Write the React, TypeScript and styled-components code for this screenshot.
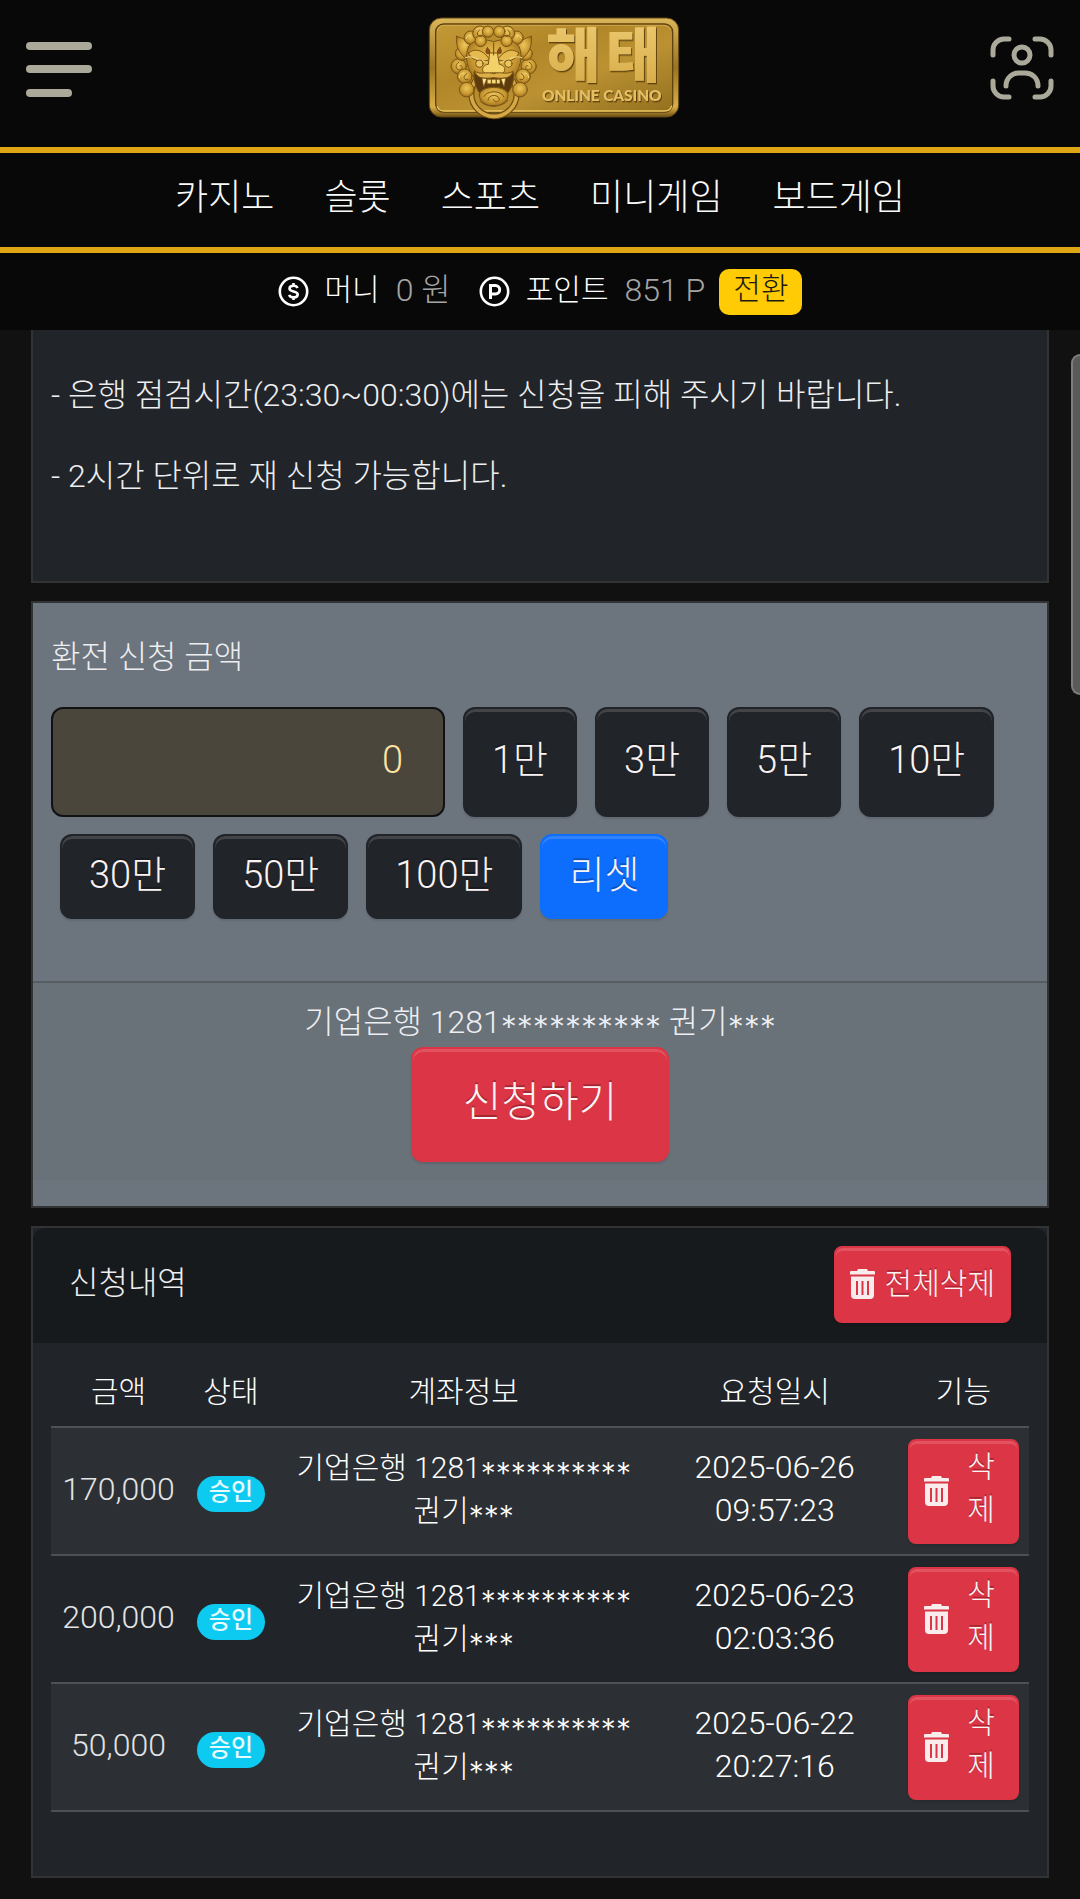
import React, { useState } from "react";
import styled, { createGlobalStyle, css } from "styled-components";

const GlobalStyle = createGlobalStyle`
  * { box-sizing: border-box; }
  body {
    margin: 0;
    background: #111111;
    color: #edeef0;
    font-family: Roboto, "Noto Sans CJK KR", sans-serif;
    font-weight: 300;
    font-size: 32px;
    line-height: 48px;
  }
  button, input { font: inherit; }
  button { cursor: pointer; }
`;

const Page = styled.div`
  position: relative;
  min-height: 100vh;
  display: flex;
  flex-direction: column;
`;

const ScrollThumb = styled.div`
  position: absolute;
  top: 354px;
  right: 0;
  width: 9px;
  height: 341px;
  border: 2px solid #7d7d7d;
  border-right: 0;
  border-radius: 9px 0 0 9px;
  background: #5a5a5a;
`;

const TopBar = styled.header`
  display: flex;
  align-items: center;
  justify-content: space-between;
  height: 147px;
  padding: 0 26px 12px;
  background: #080808;
`;

const IconButton = styled.button`
  display: flex;
  padding: 0;
  border: 0;
  background: none;
  color: #aba999;
`;

const LogoLink = styled.a`
  display: flex;
  margin-left: 26px;
`;

const LogoArt = styled.svg`
  overflow: visible;
`;

const MainNav = styled.nav`
  display: flex;
  justify-content: center;
  gap: 50px;
  padding: 21px 0 25px;
  border-top: 6px solid #dfa616;
  border-bottom: 6px solid #dfa616;
  background: #080808;
`;

const NavLink = styled.a`
  color: #fafafa;
  font-size: 36px;
  text-decoration: none;
  white-space: nowrap;
`;

const BalanceBar = styled.div`
  display: flex;
  align-items: center;
  justify-content: center;
  gap: 14px;
  height: 77px;
  background: #080808;
`;

const Balance = styled.div`
  display: flex;
  align-items: center;
  gap: 16px;
  color: #ffffff;
  font-size: 30px;

  &:first-child { margin-right: 14px; }
`;

const BalanceName = styled.span`
  padding-bottom: 4px;
`;

const BalanceValue = styled.span`
  padding-bottom: 4px;
  color: #a5a5a5;
  font-size: 32px;
`;

const ConvertButton = styled.button`
  height: 46px;
  padding: 0 14px;
  border: 0;
  border-radius: 10px;
  background: #ffcb04;
  color: #1c1a12;
  font-size: 30px;
  line-height: 40px;
  padding-bottom: 6px;
`;

const Content = styled.main`
  display: flex;
  flex-direction: column;
  gap: 18px;
  padding: 0 31px;
`;

const Panel = styled.section`
  border: 2px solid #323334;
  background: #212429;
`;

const NoticePanel = styled(Panel)`
  display: flex;
  flex-direction: column;
  gap: 33px;
  border-top: 0;
  padding: 41px 18px 81px;
`;

const NoticeLine = styled.p`
  margin: 0;
`;

const FormPanel = styled(Panel)`
  background: #6c747e;
`;

const AmountArea = styled.div`
  padding: 30px 18px 62px;
`;

const AmountLabel = styled.label`
  display: block;
  margin-bottom: 26px;
`;

const AmountRow = styled.div`
  display: flex;
  gap: 18px;

  & + & {
    margin-top: 17px;
    padding-left: 9px;
  }
`;

const AmountInput = styled.input`
  width: 394px;
  height: 110px;
  padding: 0 40px 4px;
  border: 2px solid #111214;
  border-radius: 12px;
  background: #4a463c;
  color: #ffe3a3;
  font-size: 38px;
  text-align: right;
`;

type Tone = "dark" | "blue" | "red";

const tones: Record<Tone, string> = {
  dark: "#212429",
  blue: "#0d6efd",
  red: "#dc3545",
};

const raised = css<{ $tone: Tone }>`
  border: 2px solid ${(p) => tones[p.$tone]};
  background: ${(p) => tones[p.$tone]};
  color: #faf3f4;
  text-shadow: 0 -2px 0 rgba(0, 0, 0, 0.25);
  box-shadow: inset 0 3px 0 rgba(255, 255, 255, 0.15), 0 2px 2px rgba(0, 0, 0, 0.1);
`;

const AmountButton = styled.button<{ $tone: Tone }>`
  ${raised}
  min-height: 85px;
  padding: 0 27px 4px;
  border-radius: 12px;
  font-size: 38px;
`;

const SubmitArea = styled.div`
  display: flex;
  flex-direction: column;
  align-items: center;
  margin-bottom: 26px;
  padding: 15px 0 18px;
  border-top: 2px solid #565d63;
  background: #697179;
`;

const SubmitButton = styled.button<{ $tone: Tone }>`
  ${raised}
  height: 115px;
  margin-top: 1px;
  padding: 0 50px 4px;
  border-radius: 12px;
  font-size: 42px;
`;

const MaskStars = styled.span`
  font-family: Inter, sans-serif;
  line-height: 1;
  vertical-align: -6px;
`;

const HistoryHeader = styled.div`
  display: flex;
  align-items: center;
  justify-content: space-between;
  padding: 18px 36px 20px;
  border-radius: 12px 12px 0 0;
  background: #171a1d;
`;

const HistoryTitle = styled.h2`
  margin: 0 0 4px;
  font-size: 32px;
  font-weight: 300;
`;

const DeleteAllButton = styled.button<{ $tone: Tone }>`
  ${raised}
  display: flex;
  align-items: center;
  gap: 10px;
  height: 77px;
  padding: 0 14px 2px;
  border-radius: 8px;
  font-size: 30px;
`;

const TableArea = styled.div`
  padding: 18px 18px 64px;
`;

const Table = styled.table`
  width: 100%;
  table-layout: fixed;
  border-collapse: collapse;
  font-size: 30px;
  line-height: 43px;
  text-align: center;
`;

const HeadCell = styled.th<{ $width: number }>`
  width: ${(p) => p.$width}%;
  height: 66px;
  padding: 0 0 4px;
  border-bottom: 2px solid #4d5154;
  color: #ffffff;
  font-weight: 300;
`;

const Row = styled.tr`
  height: 128px;
  border-bottom: 2px solid #4d5154;

  &:nth-child(odd) { background: #2c3034; }
`;

const Cell = styled.td`
  padding: 0 8px 4px;
  color: #ffffff;
`;

const NumberCell = styled(Cell)`
  font-size: 32px;
`;

const AmountCell = styled(NumberCell)`
  color: #e2e3e5;
`;

const ActionCell = styled.td`
  padding: 0 10px;
`;

const Badge = styled.span`
  display: inline-block;
  height: 36px;
  margin-top: 6px;
  padding: 0 12px;
  border-radius: 18px;
  background: #0dcaf0;
  color: #e8fbff;
  font-size: 24px;
  font-weight: 500;
  line-height: 32px;
  vertical-align: middle;
`;

const DeleteButton = styled.button<{ $tone: Tone }>`
  ${raised}
  display: flex;
  align-items: center;
  justify-content: space-between;
  width: 100%;
  height: 105px;
  padding: 0 20px 0 14px;
  border-radius: 8px;
`;

const DeleteText = styled.span`
  width: 32px;
  padding-bottom: 6px;
  word-break: break-all;
`;

function MenuIcon() {
  return (
    <svg width="66" height="60" viewBox="0 -4 66 60" fill="currentColor" aria-hidden="true">
      <rect width="66" height="8" rx="4" />
      <rect y="23" width="66" height="8" rx="4" />
      <rect y="47" width="46" height="8" rx="4" />
    </svg>
  );
}

function ProfileIcon() {
  return (
    <svg width="64" height="64" viewBox="0 0 64 64" fill="none" stroke="currentColor" strokeWidth="5" strokeLinecap="round" aria-hidden="true">
      <path d="M3 19v-5C3 8 8 3 14 3h5M45 3h5c6 0 11 5 11 11v5M61 45v5c0 6-5 11-11 11h-5M19 61h-5C8 61 3 56 3 50v-5" />
      <circle cx="32" cy="19" r="8" />
      <path d="M16 50c0-8 6-13 13-13h6c7 0 13 5 13 13" />
    </svg>
  );
}

function CoinIcon({ kind }: { kind: "money" | "point" }) {
  return (
    <svg width="31" height="31" viewBox="0 0 31 31" fill="none" stroke="#fff" strokeWidth="3" aria-hidden="true">
      <circle cx="15.5" cy="15.5" r="13.7" strokeWidth="2.6" />
      {kind === "money" ? (
        <path d="M19.500 12c-.6-1.600-2-2.300-4-2.300-2.300 0-4 1-4 2.800 0 4.200 8.200 1.700 8.200 6 0 1.800-1.800 2.900-4.200 2.900-2.200 0-3.800-.8-4.300-2.500M15.500 7v3M15.500 21v3" strokeWidth="2.6" />
      ) : (
        <path d="M11.500 23V9.500h5a4.200 4.200 0 0 1 0 8.400h-5" />
      )}
    </svg>
  );
}

function TrashIcon() {
  return (
    <svg width="25" height="30" viewBox="0 0 25 30" fill="#f8eced" aria-hidden="true">
      <path d="M8 0h9l1 2h6a1 1 0 0 1 1 1v2.500H0V3a1 1 0 0 1 1-1h6z" />
      <path fillRule="evenodd" d="M1 7.500h23V26a4 4 0 0 1-4 4H5a4 4 0 0 1-4-4zM6 12v14h2V12zm5.500 0v14h2V12zm5.500 0v14h2V12z" />
    </svg>
  );
}

function Logo() {
  return (
    <LogoArt width="250" height="102" viewBox="87 50 750 306" role="img" aria-label="해태 온라인 카지노">
      <defs>
        <linearGradient id="plate" x1="0" y1="0" x2="1" y2="1">
          <stop offset="0" stopColor="#c49a38" />
          <stop offset="0.35" stopColor="#b08628" />
          <stop offset="0.6" stopColor="#bb9132" />
          <stop offset="1" stopColor="#93701f" />
        </linearGradient>
        <linearGradient id="rim" x1="0" y1="0" x2="0" y2="1">
          <stop offset="0" stopColor="#dcb65a" />
          <stop offset="0.5" stopColor="#9a7420" />
          <stop offset="0.9" stopColor="#d9ae45" />
          <stop offset="1" stopColor="#6e5014" />
        </linearGradient>
        <radialGradient id="face" cx="0.5" cy="0.4" r="0.65">
          <stop offset="0" stopColor="#ecc75c" />
          <stop offset="0.6" stopColor="#c99831" />
          <stop offset="1" stopColor="#8b6218" />
        </radialGradient>
        <linearGradient id="letters" x1="0" y1="0" x2="0" y2="1">
          <stop offset="0" stopColor="#f0cd75" />
          <stop offset="1" stopColor="#d5aa45" />
        </linearGradient>
        <filter id="relief" x="-10%" y="-10%" width="120%" height="120%">
          <feDropShadow dx="3" dy="4" stdDeviation="1" floodColor="#5f4210" floodOpacity="1" />
        </filter>
      </defs>
      <rect x="88" y="53" width="748" height="297" rx="36" fill="url(#rim)" stroke="#5f4614" strokeWidth="3" />
      <rect x="107" y="71" width="711" height="264" rx="24" fill="url(#plate)" stroke="#5d4312" strokeWidth="4" />
      <path d="M112 318q4 14 20 14h662q18 0 21-16" fill="none" stroke="#efc95f" strokeWidth="4" />
      <path d="M112 92q4-17 22-17h654q18 0 24 14" fill="none" stroke="#dfb757" strokeWidth="2" />
      <g stroke="#7a5515" strokeWidth="3" strokeLinejoin="round" strokeLinecap="round">
        <circle cx="282" cy="280" r="68" fill="none" stroke="#6d4a10" strokeWidth="18" />
        <circle cx="282" cy="280" r="68" fill="none" stroke="#d5a745" strokeWidth="11" />
        <g fill="url(#face)">
          <circle cx="176" cy="198" r="23" />
          <circle cx="386" cy="198" r="23" />
          <circle cx="194" cy="228" r="22" />
          <circle cx="369" cy="228" r="22" />
          <circle cx="200" cy="268" r="22" />
          <circle cx="360" cy="268" r="22" />
          <circle cx="186" cy="160" r="20" />
          <circle cx="377" cy="160" r="20" />
          <path d="M170 108c20 6 34 12 48 34l-22 32c-18-14-30-38-26-66z" />
          <path d="M394 108c-20 6-34 12-48 34l22 32c18-14 30-38 26-66z" />
          <circle cx="212" cy="112" r="20" />
          <circle cx="350" cy="112" r="20" />
          <circle cx="240" cy="99" r="22" />
          <circle cx="322" cy="99" r="22" />
          <circle cx="264" cy="94" r="17" />
          <circle cx="298" cy="94" r="17" />
          <path d="M206 138c22-26 50-22 75-14 26-8 54-12 76 14 14 32 2 72-20 96-14 18-34 22-56 22s-42-4-56-22c-22-24-34-64-19-96z" />
          <circle cx="242" cy="122" r="17" />
          <circle cx="320" cy="122" r="17" />
        </g>
        <path d="M206 158c16-14 34-10 50 4l14 16-24 6c-18-4-34-8-40-26zM356 158c-16-14-34-10-50 4l-14 16 24 6c18-4 34-8 40-26z" fill="#e5bb50" />
        <path d="M196 172c22-8 34 4 62 14M366 172c-22-8-34 4-62 14" fill="none" stroke="#f7dc84" />
        <circle cx="238" cy="190" r="11" fill="#ebc560" />
        <circle cx="325" cy="190" r="11" fill="#ebc560" />
        <path d="M270 158h22l6 34c20 2 22 26 4 28-7 1-11-3-21-3s-14 4-21 3c-18-2-16-26 4-28z" fill="#f4d068" />
        <path d="M281 128v36M262 142c-6 8-6 18 2 18s8-10-2-18zM300 142c-10 8-10 18-2 18s8-10 2-18z" fill="#8b4f10" stroke="#7b450e" />
        <path d="M222 216c16 18 36 6 59 6s43 12 60-6c2 34-10 52-18 62-10-22-70-22-84 0-10-12-18-34-17-62z" fill="#5d3b0d" />
        <path d="M224 212c16 14 34 0 57 8 23-8 42 6 58-8-6 22-24 24-58 20-34 4-50 2-57-20z" fill="#dcaf47" />
        <path d="M246 234l5 25 9-23zM317 234l-5 25-9-23z" fill="#ffe79b" strokeWidth="2" />
        <path d="M262 237h12v13h-12zM276 237h12v13h-12zM290 237h10v13h-10z" fill="#f8da7e" strokeWidth="2" />
        <path d="M238 282c8-28 78-28 86 0 2 20-20 36-43 36s-45-16-43-36z" fill="url(#face)" />
        <path d="M252 288c8-18 52-20 60 2M264 300c0-18 30-20 34-4 1 10-16 12-18 2M240 302c12 20 70 20 84-2" fill="none" stroke="#7c5616" />
        <path d="M176 186c-14 8-8 26 6 22 8-4 6-14-2-12M388 186c14 8 8 26-6 22-8-4-6-14 2-12M200 220c-14 8-8 22 4 18M364 220c14 8 8 22-4 18M238 90c-14 10-2 24 10 16M324 90c14 10 2 24-10 16" fill="none" stroke="#795214" />
        <path d="M212 104q-12 0-14 10M350 104q12 0 14 10M228 88q8-8 18-5M334 88q-8-8-18-5M190 218q-12 2-12 14M374 218q12 2 12 14" fill="none" stroke="#f7d97c" />
      </g>
      <g fontFamily='"Noto Sans CJK KR", sans-serif' fontWeight="900" fontSize="178" fill="url(#letters)" filter="url(#relief)">
        <text x="438" y="231">해</text>
        <text x="617" y="231">태</text>
      </g>
      <text x="426" y="303" fontFamily="Lato, sans-serif" fontWeight="900" fontSize="46" fill="#e5bf62" filter="url(#relief)">ONLINE CASINO</text>
    </LogoArt>
  );
}

const menu = ["카지노", "슬롯", "스포츠", "미니게임", "보드게임"];
const notices = [
  "- 은행 점검시간(23:30~00:30)에는 신청을 피해 주시기 바랍니다.",
  "- 2시간 단위로 재 신청 가능합니다.",
];
const firstAmounts = [1, 3, 5, 10];
const secondAmounts = [30, 50, 100];
const columns = [
  { label: "금액", width: 13.8 },
  { label: "상태", width: 9.2 },
  { label: "계좌정보", width: 38.4 },
  { label: "요청일시", width: 25.2 },
  { label: "기능", width: 13.4 },
];
const requests = [
  { amount: "170,000", date: "2025-06-26", time: "09:57:23" },
  { amount: "200,000", date: "2025-06-23", time: "02:03:36" },
  { amount: "50,000", date: "2025-06-22", time: "20:27:16" },
];

function BankNumber() {
  return <>기업은행 1281<MaskStars>**********</MaskStars></>;
}

function OwnerName() {
  return <>권기<MaskStars>***</MaskStars></>;
}

export default function App() {
  const [amount, setAmount] = useState(0);
  const add = (n: number) => setAmount((current) => current + n * 10000);

  return (
    <Page>
      <GlobalStyle />
      <TopBar>
        <IconButton type="button" aria-label="메뉴"><MenuIcon /></IconButton>
        <LogoLink href="#"><Logo /></LogoLink>
        <IconButton type="button" aria-label="내 정보"><ProfileIcon /></IconButton>
      </TopBar>
      <MainNav>
        {menu.map((item) => <NavLink key={item} href="#">{item}</NavLink>)}
      </MainNav>
      <BalanceBar>
        <Balance><CoinIcon kind="money" /><BalanceName>머니</BalanceName><BalanceValue>0 원</BalanceValue></Balance>
        <Balance><CoinIcon kind="point" /><BalanceName>포인트</BalanceName><BalanceValue>851 P</BalanceValue></Balance>
        <ConvertButton type="button">전환</ConvertButton>
      </BalanceBar>
      <Content>
        <NoticePanel>
          {notices.map((line) => <NoticeLine key={line}>{line}</NoticeLine>)}
        </NoticePanel>
        <FormPanel>
          <AmountArea>
            <AmountLabel htmlFor="amount">환전 신청 금액</AmountLabel>
            <AmountRow>
              <AmountInput
                id="amount"
                inputMode="numeric"
                value={amount.toLocaleString("en-US")}
                onChange={(e) => setAmount(Number(e.target.value.replace(/\D/g, "")))}
              />
              {firstAmounts.map((n) => (
                <AmountButton key={n} type="button" $tone="dark" onClick={() => add(n)}>{`${n}만`}</AmountButton>
              ))}
            </AmountRow>
            <AmountRow>
              {secondAmounts.map((n) => (
                <AmountButton key={n} type="button" $tone="dark" onClick={() => add(n)}>{`${n}만`}</AmountButton>
              ))}
              <AmountButton type="button" $tone="blue" onClick={() => setAmount(0)}>리셋</AmountButton>
            </AmountRow>
          </AmountArea>
          <SubmitArea>
            <div><BankNumber /> <OwnerName /></div>
            <SubmitButton type="button" $tone="red">신청하기</SubmitButton>
          </SubmitArea>
        </FormPanel>
        <Panel>
          <HistoryHeader>
            <HistoryTitle>신청내역</HistoryTitle>
            <DeleteAllButton type="button" $tone="red"><TrashIcon />전체삭제</DeleteAllButton>
          </HistoryHeader>
          <TableArea>
            <Table>
              <thead>
                <tr>
                  {columns.map((c) => <HeadCell key={c.label} $width={c.width} scope="col">{c.label}</HeadCell>)}
                </tr>
              </thead>
              <tbody>
                {requests.map((r) => (
                  <Row key={r.date}>
                    <AmountCell>{r.amount}</AmountCell>
                    <Cell><Badge>승인</Badge></Cell>
                    <Cell><BankNumber /><br /><OwnerName /></Cell>
                    <NumberCell>{r.date}<br />{r.time}</NumberCell>
                    <ActionCell>
                      <DeleteButton type="button" $tone="red"><TrashIcon /><DeleteText>삭제</DeleteText></DeleteButton>
                    </ActionCell>
                  </Row>
                ))}
              </tbody>
            </Table>
          </TableArea>
        </Panel>
      </Content>
      <ScrollThumb />
    </Page>
  );
}
